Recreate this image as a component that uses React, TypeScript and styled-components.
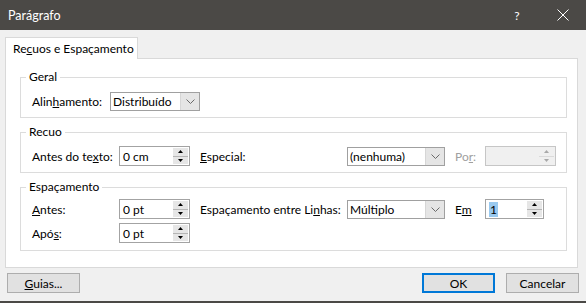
import React from 'react'
import styled, { createGlobalStyle } from 'styled-components'

const GlobalStyle = createGlobalStyle`
  html, body {
    margin: 0;
    padding: 0;
    background: #f0f0f0;
  }
  body {
    font-family: Lato, 'Liberation Sans', sans-serif;
    font-size: 12px;
    color: #000;
  }
`

const Window = styled.div`
  width: 586px;
  height: 303px;
  box-sizing: border-box;
  display: flex;
  flex-direction: column;
  background: #f0f0f0;
  border-bottom: 2px solid #4b4946;
`

const TitleBar = styled.div`
  height: 30px;
  flex: none;
  display: flex;
  align-items: center;
  background: #4b4946;
  color: #fff;
`

const Title = styled.div`
  flex: 1;
  padding-left: 8px;
  font-size: 12.5px;
`

const TitleButton = styled.div`
  width: 46px;
  height: 30px;
  display: flex;
  align-items: center;
  justify-content: center;
  font-size: 12px;
`

const Content = styled.div`
  flex: 1;
  display: flex;
  flex-direction: column;
  padding: 7px 8px 0 5px;
  min-height: 0;
`

const Tabs = styled.div`
  display: flex;
`

const Tab = styled.div`
  position: relative;
  z-index: 1;
  width: 133px;
  height: 22px;
  box-sizing: border-box;
  margin-bottom: -1px;
  padding-left: 7px;
  display: flex;
  align-items: center;
  background: #fff;
  border: 1px solid #d9d9d9;
  border-bottom: none;
`

const Panel = styled.div`
  flex: 1;
  box-sizing: border-box;
  background: #fff;
  border: 1px solid #d9d9d9;
  padding: 10px 10px 0 14px;
  display: flex;
  flex-direction: column;
`

const Group = styled.fieldset<{ $top?: number; $bottom?: number }>`
  margin: 0;
  min-width: 0;
  border: 1px solid #dcdcdc;
  padding: ${p => p.$top ?? 6}px 10px ${p => p.$bottom ?? 6}px 11px;
  display: flex;
  flex-direction: column;
  gap: 4px;

  & + & {
    margin-top: 6px;
  }
`

const Legend = styled.legend`
  padding: 0 3px;
  margin-left: -6px;
  line-height: 16px;
`

const Row = styled.div`
  display: flex;
  align-items: center;
  min-height: 20px;
`

const Label = styled.div<{ $w: number; $pad?: number; $disabled?: boolean }>`
  width: ${p => p.$w}px;
  flex: none;
  box-sizing: border-box;
  padding-left: ${p => p.$pad || 0}px;
  color: ${p => (p.$disabled ? '#a0a0a0' : '#000')};
  white-space: nowrap;
`

const Gap = styled.div<{ $w: number }>`
  width: ${p => p.$w}px;
  flex: none;
`

const ComboBox = styled.div<{ $w: number }>`
  width: ${p => p.$w}px;
  height: 19px;
  box-sizing: border-box;
  flex: none;
  display: flex;
  align-items: stretch;
  background: #fff;
  border: 1px solid #a0a0a0;
`

const ComboValue = styled.div`
  flex: 1;
  display: flex;
  align-items: center;
  padding-left: 2px;
  white-space: nowrap;
`

const DropButton = styled.div`
  width: 18px;
  flex: none;
  display: flex;
  align-items: center;
  justify-content: center;
  background: #e5e5e5;
  border-left: 1px solid #d6d6d6;
`

const SpinBox = styled.div<{ $w: number; $disabled?: boolean }>`
  width: ${p => p.$w}px;
  height: 20px;
  box-sizing: border-box;
  flex: none;
  display: flex;
  align-items: center;
  background: ${p => (p.$disabled ? '#f0f0f0' : '#fff')};
  border: 1px solid ${p => (p.$disabled ? '#c6c6c6' : '#a3a3a3')};
`

const SpinValue = styled.div`
  flex: 1;
  padding-left: 3px;
`

const Selected = styled.span`
  background: #99c9ef;
  padding: 0 1px;
`

const SpinButtons = styled.div`
  width: 15px;
  height: 16px;
  margin-right: 1px;
  display: flex;
  flex-direction: column;
`

const SpinHalf = styled.div<{ $top?: boolean; $disabled?: boolean }>`
  flex: 1;
  display: flex;
  align-items: center;
  justify-content: center;
  background: ${p => (p.$disabled ? '#f0f0f0' : '#e6e6e6')};
  border-bottom: ${p => (p.$top ? `1px solid ${p.$disabled ? '#dadada' : '#b5b5b5'}` : 'none')};
`

const Footer = styled.div`
  flex: none;
  display: flex;
  align-items: center;
  padding: 5px 7px 8px 7px;
`

const Button = styled.div<{ $primary?: boolean }>`
  width: 73px;
  height: 20px;
  box-sizing: border-box;
  display: flex;
  align-items: center;
  justify-content: center;
  background: #e1e1e1;
  border: ${p => (p.$primary ? '2px solid #0078d7' : '1px solid #adadad')};

  & + & {
    margin-left: 11px;
  }
`

const Spacer = styled.div`
  flex: 1;
`

const Chevron = () => (
  <svg width="9" height="5" viewBox="0 0 9 5">
    <polyline points="0.5,0.5 4.5,4.5 8.5,0.5" fill="none" stroke="#6a6a6a" strokeWidth="1" />
  </svg>
)

const Combo = ({ w, value }: { w: number; value: string }) => (
  <ComboBox $w={w}>
    <ComboValue>{value}</ComboValue>
    <DropButton>
      <Chevron />
    </DropButton>
  </ComboBox>
)

const Arrow = ({ up, disabled }: { up?: boolean; disabled?: boolean }) => (
  <svg width="5" height="3" viewBox="0 0 5 3">
    <polygon
      points={up ? '2.5,0 5,3 0,3' : '0,0 5,0 2.5,3'}
      fill={disabled ? '#a8a8a8' : '#000'}
    />
  </svg>
)

const Spin = ({ w, value, disabled }: { w: number; value?: React.ReactNode; disabled?: boolean }) => (
  <SpinBox $w={w} $disabled={disabled}>
    <SpinValue>{value}</SpinValue>
    <SpinButtons>
      <SpinHalf $top $disabled={disabled}>
        <Arrow up disabled={disabled} />
      </SpinHalf>
      <SpinHalf $disabled={disabled}>
        <Arrow disabled={disabled} />
      </SpinHalf>
    </SpinButtons>
  </SpinBox>
)

const CloseIcon = () => (
  <svg width="12" height="12" viewBox="0 0 12 12">
    <path d="M0.5 0.5 L11.5 11.5 M11.5 0.5 L0.5 11.5" stroke="#fff" strokeWidth="1" />
  </svg>
)

export default function App() {
  return (
    <>
      <GlobalStyle />
      <Window>
        <TitleBar>
          <Title>Parágrafo</Title>
          <TitleButton>?</TitleButton>
          <TitleButton>
            <CloseIcon />
          </TitleButton>
        </TitleBar>
        <Content>
          <Tabs>
            <Tab>
              <span>
                Re<u>c</u>uos e Espaçamento
              </span>
            </Tab>
          </Tabs>
          <Panel>
            <Group>
              <Legend>Geral</Legend>
              <Row>
                <Label $w={78}>
                  Alin<u>h</u>amento:
                </Label>
                <Combo w={90} value="Distribuído" />
              </Row>
            </Group>
            <Group>
              <Legend>Recuo</Legend>
              <Row>
                <Label $w={87}>
                  Antes do te<u>x</u>to:
                </Label>
                <Spin w={71} value="0 cm" />
                <Gap $w={10} />
                <Label $w={147}>
                  <u>E</u>special:
                </Label>
                <Combo w={98} value="(nenhuma)" />
                <Label $w={40} $pad={10} $disabled>
                  Po<u>r</u>:
                </Label>
                <Spin w={71} disabled />
              </Row>
            </Group>
            <Group $top={4} $bottom={7}>
              <Legend>Espaçamento</Legend>
              <Row>
                <Label $w={87}>
                  <u>A</u>ntes:
                </Label>
                <Spin w={71} value="0 pt" />
                <Gap $w={10} />
                <Label $w={147}>
                  Espaçamento entre Li<u>n</u>has:
                </Label>
                <Combo w={98} value="Múltiplo" />
                <Label $w={40} $pad={10}>
                  E<u>m</u>
                </Label>
                <Spin w={59} value={<Selected>1</Selected>} />
              </Row>
              <Row>
                <Label $w={87}>
                  Apó<u>s</u>:
                </Label>
                <Spin w={71} value="0 pt" />
              </Row>
            </Group>
          </Panel>
        </Content>
        <Footer>
          <Button>
            <span>
              <u>G</u>uias...
            </span>
          </Button>
          <Spacer />
          <Button $primary>OK</Button>
          <Button>Cancelar</Button>
        </Footer>
      </Window>
    </>
  )
}
